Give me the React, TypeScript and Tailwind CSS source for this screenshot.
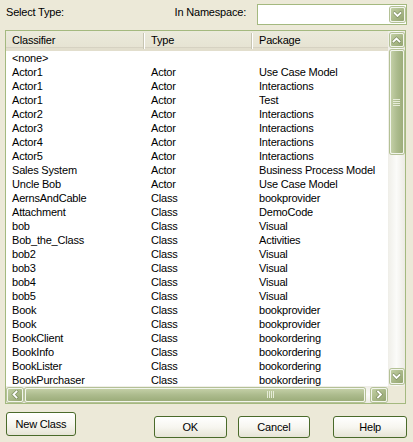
import React from "react";

type Dir = "up" | "down" | "left" | "right";

function Chevron({ dir }: { dir: Dir }) {
  const pts = {
    up: "1.5,5.5 4.5,2.5 7.5,5.5",
    down: "1.5,3 4.5,6 7.5,3",
    left: "5.5,1.5 2.5,4.5 5.5,7.5",
    right: "3,1.5 6,4.5 3,7.5",
  }[dir];
  return (
    <svg width="9" height="9" viewBox="0 0 9 9">
      <polyline points={pts} fill="none" stroke="#4E5E36" strokeWidth="3.2" strokeLinecap="square" opacity="0.45" />
      <polyline points={pts} fill="none" stroke="#FFFFFF" strokeWidth="1.8" strokeLinecap="square" />
    </svg>
  );
}

function ScrollBtn({ dir, cls }: { dir: Dir; cls: string }) {
  return (
    <div
      className={
        "flex items-center justify-center rounded-[2px] border border-[#F2F5EC] bg-gradient-to-br from-[#C2CFA4] to-[#93A46F] shadow-[0_0_0_1px_#B4C196] " +
        cls
      }
    >
      <Chevron dir={dir} />
    </div>
  );
}

const rows: [string, string, string][] = [
  ["<none>", "", ""],
  ["Actor1", "Actor", "Use Case Model"],
  ["Actor1", "Actor", "Interactions"],
  ["Actor1", "Actor", "Test"],
  ["Actor2", "Actor", "Interactions"],
  ["Actor3", "Actor", "Interactions"],
  ["Actor4", "Actor", "Interactions"],
  ["Actor5", "Actor", "Interactions"],
  ["Sales System", "Actor", "Business Process Model"],
  ["Uncle Bob", "Actor", "Use Case Model"],
  ["AernsAndCable", "Class", "bookprovider"],
  ["Attachment", "Class", "DemoCode"],
  ["bob", "Class", "Visual"],
  ["Bob_the_Class", "Class", "Activities"],
  ["bob2", "Class", "Visual"],
  ["bob3", "Class", "Visual"],
  ["bob4", "Class", "Visual"],
  ["bob5", "Class", "Visual"],
  ["Book", "Class", "bookprovider"],
  ["Book", "Class", "bookprovider"],
  ["BookClient", "Class", "bookordering"],
  ["BookInfo", "Class", "bookordering"],
  ["BookLister", "Class", "bookordering"],
  ["BookPurchaser", "Class", "bookordering"],
];

function DlgButton({ label, cls }: { label: string; cls: string }) {
  return (
    <div
      className={
        "flex items-center justify-center rounded-[3px] border border-[#4A6A2A] bg-gradient-to-b from-[#FFFFFF] via-[#F7F6F0] to-[#E6E4D6] text-black " +
        cls
      }
    >
      {label}
    </div>
  );
}

function HeaderCell({ label, w, divider }: { label: string; w: string; divider: boolean }) {
  return (
    <div className={"relative flex h-full items-center pl-[6px] " + w}>
      <span className="pt-[2px]">{label}</span>
      {divider && (
        <div className="absolute right-0 top-[2px] flex h-[16px]">
          <div className="w-px bg-[#C7C5B2]" />
          <div className="w-px bg-white" />
        </div>
      )}
    </div>
  );
}

export default function App() {
  return (
    <div className="flex h-[442px] w-[413px] flex-col bg-[#ECE9D8] pl-[5px] pr-[6px] font-['Liberation_Sans',Arial,sans-serif] text-[11px] leading-none tracking-[-0.2px] text-black">
      {/* top row */}
      <div className="flex h-[26px] items-start pt-[4px]">
        <div className="ml-[1px] mt-[3px]">Select Type:</div>
        <div className="ml-auto mr-[11px] mt-[3px]">In Namespace:</div>
        <div className="flex h-[21px] w-[150px] items-center justify-end border border-[#A4B97F] bg-white pr-[1px]">
          <ScrollBtn dir="down" cls="h-[15px] w-[15px]" />
        </div>
      </div>

      {/* list */}
      <div className="mt-[4px] flex h-[374px] w-[401px] flex-col border border-[#A4B97F] bg-white">
        <div className="flex h-[355px]">
          <div className="flex w-[382px] flex-col overflow-hidden">
            <div className="flex h-[20px] shrink-0 border-b-[3px] border-b-[#E2DECD] bg-gradient-to-b from-[#EBEADB] to-[#E6E3D3] shadow-[inset_0_-1px_0_#D6D2C2]">
              <HeaderCell label="Classifier" w="w-[139px]" divider />
              <HeaderCell label="Type" w="w-[108px]" divider />
              <HeaderCell label="Package" w="flex-1" divider={false} />
            </div>
            <div className="flex flex-col overflow-hidden">
              {rows.map((r, i) => (
                <div key={i} className="flex h-[14px] shrink-0 items-center whitespace-nowrap">
                  <div className="w-[139px] pl-[6px]">{r[0]}</div>
                  <div className="w-[108px] pl-[6px]">{r[1]}</div>
                  <div className="flex-1 pl-[6px]">{r[2]}</div>
                </div>
              ))}
            </div>
          </div>
          {/* vertical scrollbar */}
          <div className="flex w-[17px] flex-col items-center bg-gradient-to-r from-[#EFEEE8] via-[#FBFBF9] to-[#ECEBE4] pb-[2px] pt-[2px]">
            <ScrollBtn dir="up" cls="h-[14px] w-[14px]" />
            <div className="mt-[3px] flex h-[104px] w-[14px] items-center justify-center rounded-[2px] border border-[#F2F5EC] bg-gradient-to-r from-[#C3CFA6] via-[#ACBB8D] to-[#9CAD7A] shadow-[0_0_0_1px_#B4C196]">
              <div className="flex flex-col gap-[1px]">
                <div className="h-px w-[7px] bg-[#E6ECD8]" />
                <div className="h-px w-[7px] bg-[#E6ECD8]" />
                <div className="h-px w-[7px] bg-[#E6ECD8]" />
                <div className="h-px w-[7px] bg-[#E6ECD8]" />
              </div>
            </div>
            <div className="flex-1" />
            <ScrollBtn dir="down" cls="h-[15px] w-[14px]" />
          </div>
        </div>
        {/* horizontal scrollbar */}
        <div className="flex h-[17px]">
          <div className="flex w-[382px] items-center bg-gradient-to-b from-[#EFEEE8] via-[#FBFBF9] to-[#ECEBE4] px-[1px]">
            <ScrollBtn dir="left" cls="h-[14px] w-[16px]" />
            <div className="ml-[2px] flex h-[14px] w-[340px] items-center justify-center rounded-[2px] border border-[#F2F5EC] bg-gradient-to-b from-[#C3CFA6] via-[#ACBB8D] to-[#9CAD7A] shadow-[0_0_0_1px_#B4C196]">
              <div className="ml-[150px] flex gap-[1px]">
                <div className="h-[7px] w-px bg-[#E6ECD8]" />
                <div className="h-[7px] w-px bg-[#E6ECD8]" />
                <div className="h-[7px] w-px bg-[#E6ECD8]" />
                <div className="h-[7px] w-px bg-[#E6ECD8]" />
              </div>
            </div>
            <div className="flex-1" />
            <ScrollBtn dir="right" cls="h-[14px] w-[16px]" />
          </div>
          <div className="flex-1 bg-[#ECE9D8]" />
        </div>
      </div>

      {/* buttons */}
      <div className="flex items-start">
        <DlgButton label="New Class" cls="ml-[1px] mt-[8px] h-[24px] w-[70px]" />
        <DlgButton label="OK" cls="ml-[78px] mt-[12px] h-[22px] w-[73px]" />
        <DlgButton label="Cancel" cls="ml-[11px] mt-[12px] h-[22px] w-[73px]" />
        <DlgButton label="Help" cls="ml-[23px] mt-[12px] h-[22px] w-[74px]" />
      </div>
    </div>
  );
}
